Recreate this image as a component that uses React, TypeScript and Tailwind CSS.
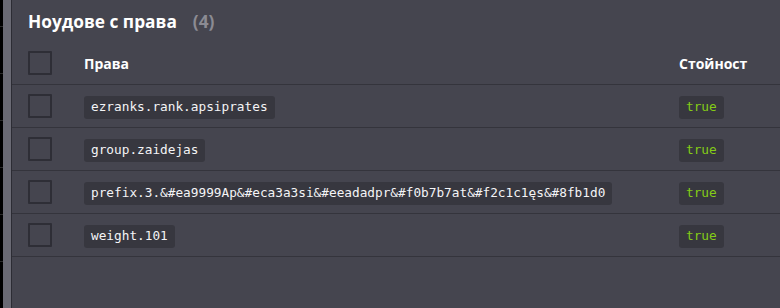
import React from 'react';

const rows = [
  { key: 'ezranks.rank.apsiprates', value: 'true' },
  { key: 'group.zaidejas', value: 'true' },
  { key: 'prefix.3.&#ea9999Ap&#eca3a3si&#eeadadpr&#f0b7b7at&#f2c1c1ęs&#8fb1d0', value: 'true' },
  { key: 'weight.101', value: 'true' },
];

const sans = { fontFamily: '"Open Sans", "Noto Sans", sans-serif' };
const mono = { fontFamily: '"DejaVu Sans Mono", "Liberation Mono", monospace' };

function Checkbox() {
  return <div className="w-6 h-6 border-2 border-[#2e2e36] rounded-[1px] shrink-0" />;
}

function Badge({ children, green }: { children: React.ReactNode; green?: boolean }) {
  return (
    <span
      className={`inline-flex items-center h-[23px] px-[7px] rounded-[3px] bg-[#37373f] text-[12.75px] whitespace-nowrap ${
        green ? 'text-[#84cc16]' : 'text-[#f4f4f6]'
      }`}
      style={mono}
    >
      {children}
    </span>
  );
}

export default function App() {
  return (
    <div className="w-[780px] h-[308px] flex bg-[#45454f] overflow-hidden" style={sans}>
      <div className="w-[3px] bg-black flex flex-col shrink-0">
        {[0, 1, 2, 3, 4, 5, 6].map((i) => (
          <div key={i} className="h-[47px] shrink-0 border-b border-[#2a2a2a] first:h-[27px]" />
        ))}
      </div>
      <div className="w-[8px] bg-[#6a6a74] shrink-0" />
      <div className="w-px bg-[#2c2c34] shrink-0" />

      <div className="flex-1 flex flex-col">
        <div className="h-[42px] flex items-center pl-[16px] pt-[1px]">
          <h1 className="text-[17.3px] font-bold text-white leading-none">Ноудове с права</h1>
          <span className="ml-[16px] text-[17.3px] font-bold text-[#8b8b93] leading-none">(4)</span>
        </div>

        <div className="h-[43px] flex items-center border-b border-[#34343c] pl-[16px]">
          <Checkbox />
          <div className="ml-[32px] flex-1 text-[14px] font-bold text-white">Права</div>
          <div className="w-[102px] text-[14px] font-bold text-white pl-[1px]">Стойност</div>
        </div>

        {rows.map((r) => (
          <div key={r.key} className="h-[43px] flex items-center border-b border-[#34343c] pl-[16px]">
            <Checkbox />
            <div className="ml-[32px] flex-1">
              <Badge>{r.key}</Badge>
            </div>
            <div className="w-[101px]">
              <Badge green>{r.value}</Badge>
            </div>
          </div>
        ))}
      </div>
    </div>
  );
}
